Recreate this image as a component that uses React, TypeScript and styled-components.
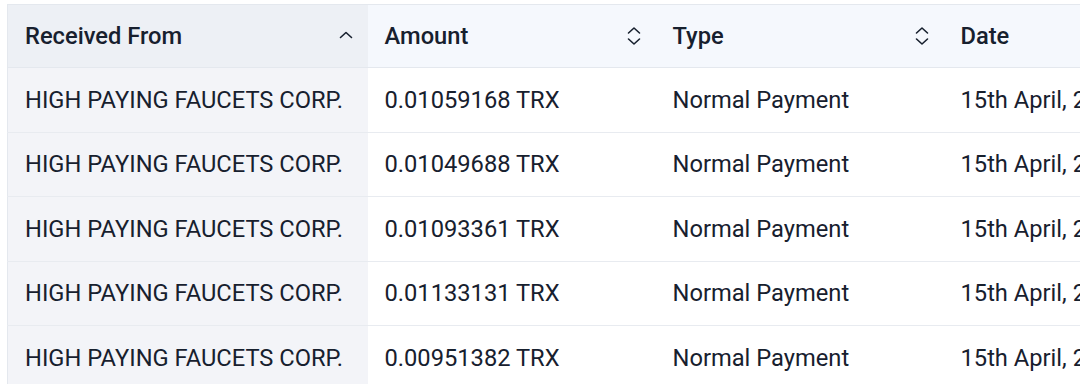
import React from 'react';
import styled, { createGlobalStyle } from 'styled-components';

const GlobalStyle = createGlobalStyle`
  html, body {
    margin: 0;
    padding: 0;
    background: #ffffff;
    overflow: hidden;
  }
  body {
    font-family: Roboto, "Liberation Sans", sans-serif;
    color: #17202e;
  }
`;

type Column = {
  key: string;
  title: string;
  width: number;
  sort: 'asc' | 'none';
};

const columns: Column[] = [
  { key: 'from', title: 'Received From', width: 360, sort: 'asc' },
  { key: 'amount', title: 'Amount', width: 288, sort: 'none' },
  { key: 'type', title: 'Type', width: 288, sort: 'none' },
  { key: 'date', title: 'Date', width: 288, sort: 'none' },
];

const amounts = [
  '0.01059168 TRX',
  '0.01049688 TRX',
  '0.01093361 TRX',
  '0.01133131 TRX',
  '0.00951382 TRX',
];

const rows = amounts.map((amount) => ({
  from: 'HIGH PAYING FAUCETS CORP.',
  amount,
  type: 'Normal Payment',
  date: '15th April, 2023',
}));

function SortIcon({ sort }: { sort: 'asc' | 'none' }) {
  if (sort === 'asc') {
    return (
      <svg width="16" height="20" viewBox="0 0 16 20" fill="none">
        <path
          d="M2.5 11.5L8 6.5l5.5 5"
          stroke="#17202e"
          strokeWidth="1.6"
          strokeLinecap="round"
          strokeLinejoin="round"
        />
      </svg>
    );
  }
  return (
    <svg width="16" height="22" viewBox="0 0 16 22" fill="none">
      <path
        d="M2.5 8L8 3l5.5 5M2.5 14L8 19l5.5-5"
        stroke="#17202e"
        strokeWidth="1.6"
        strokeLinecap="round"
        strokeLinejoin="round"
      />
    </svg>
  );
}

export default function App() {
  return (
    <>
      <GlobalStyle />
      <Frame>
        <Table>
          <thead>
            <tr>
              {columns.map((col) => (
                <HeaderCell
                  key={col.key}
                  $sorted={col.sort === 'asc'}
                  style={{ width: col.width, minWidth: col.width }}
                >
                  <HeaderInner>
                    <span>{col.title}</span>
                    <SortIcon sort={col.sort} />
                  </HeaderInner>
                </HeaderCell>
              ))}
            </tr>
          </thead>
          <tbody>
            {rows.map((row, i) => (
              <tr key={i}>
                {columns.map((col) => (
                  <BodyCell key={col.key} $sorted={col.sort === 'asc'}>
                    {row[col.key as keyof typeof row]}
                  </BodyCell>
                ))}
              </tr>
            ))}
          </tbody>
        </Table>
      </Frame>
    </>
  );
}

const Frame = styled.div`
  padding: 4px 0 0 7px;
  width: 1080px;
  height: 384px;
  box-sizing: border-box;
  overflow: hidden;
`;

const Table = styled.table`
  border-collapse: collapse;
  table-layout: fixed;
  border-top: 1px solid #e4e8ee;
  border-left: 1px solid #e4e8ee;
  white-space: nowrap;
`;

const HeaderCell = styled.th<{ $sorted: boolean }>`
  height: 63px;
  padding: 0 14px 0 17px;
  box-sizing: border-box;
  text-align: left;
  font-size: 23.7px;
  font-weight: 500;
  color: #17202e;
  background: ${(p) => (p.$sorted ? '#edf0f5' : '#f5f8fd')};
  border-bottom: 1px solid #e4e8ee;
`;

const HeaderInner = styled.div`
  display: flex;
  align-items: center;
  justify-content: space-between;
  svg {
    flex-shrink: 0;
  }
`;

const BodyCell = styled.td<{ $sorted: boolean }>`
  height: 64.5px;
  padding: 0 17px;
  box-sizing: border-box;
  font-size: 23.7px;
  font-weight: 400;
  color: #17202e;
  background: ${(p) => (p.$sorted ? '#f3f4f8' : '#ffffff')};
  border-bottom: 1px solid #e8ebf0;
  overflow: hidden;
`;
